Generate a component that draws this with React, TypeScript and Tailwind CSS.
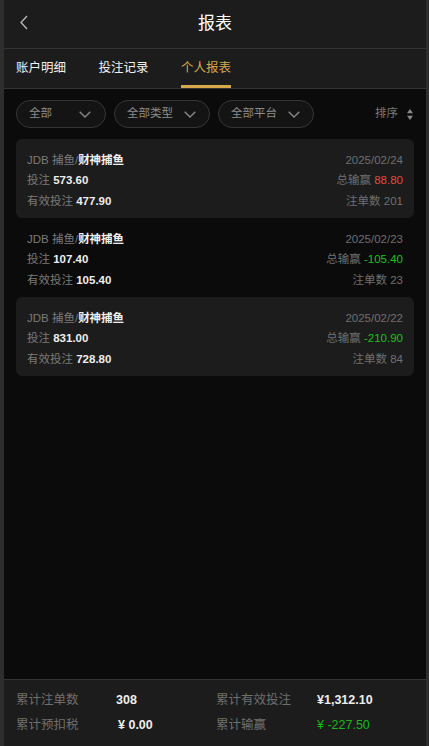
import React from "react";

type Row = {
  date: string;
  bet: string;
  valid: string;
  win: string;
  count: number;
  shaded: boolean;
};

const rows: Row[] = [
  { date: "2025/02/24", bet: "573.60", valid: "477.90", win: "88.80", count: 201, shaded: true },
  { date: "2025/02/23", bet: "107.40", valid: "105.40", win: "-105.40", count: 23, shaded: false },
  { date: "2025/02/22", bet: "831.00", valid: "728.80", win: "-210.90", count: 84, shaded: true },
];

const Chevron = () => (
  <svg width="12" height="7" viewBox="0 0 12 7" fill="none" className="shrink-0">
    <path d="M0.7 0.7 L6 6 L11.3 0.7" stroke="#8a8a8a" strokeWidth="1.3" />
  </svg>
);

const FilterPill: React.FC<{ label: string; wide?: boolean }> = ({ label, wide }) => (
  <div
    className={`h-[28px] rounded-full border border-[#363636] bg-[#141414] flex items-center pl-3 pr-[13px] gap-[11px] text-[11.5px] text-[#8c8c8c] ${
      wide ? "w-[90px] justify-between pr-[14px]" : ""
    }`}
  >
    <span>{label}</span>
    <Chevron />
  </div>
);

const ReportCard: React.FC<{ row: Row }> = ({ row }) => {
  const negative = row.win.startsWith("-");
  return (
    <div
      className={`h-[79px] rounded-[6px] px-[11px] pt-[10.5px] text-[11.5px] leading-[20.5px] ${
        row.shaded ? "bg-[#1c1c1c]" : ""
      }`}
    >
      <div className="flex justify-between">
        <span className="text-[#7a7a7a]">
          JDB 捕鱼/<span className="text-[#f0f0f0] font-bold">财神捕鱼</span>
        </span>
        <span className="text-[#6f6f6f]">{row.date}</span>
      </div>
      <div className="flex justify-between">
        <span className="text-[#7a7a7a]">
          投注 <span className="text-[#eeeeee] font-bold">{row.bet}</span>
        </span>
        <span className="text-[#6f6f6f]">
          总输赢{" "}
          <span className={negative ? "text-[#16c516]" : "text-[#e24a3b]"}>{row.win}</span>
        </span>
      </div>
      <div className="flex justify-between">
        <span className="text-[#7a7a7a]">
          有效投注 <span className="text-[#eeeeee] font-bold">{row.valid}</span>
        </span>
        <span className="text-[#6f6f6f]">注单数 {row.count}</span>
      </div>
    </div>
  );
};

const App: React.FC = () => {
  return (
    <div className="w-[429px] h-[746px] bg-[#2e2e2e] pl-[4px] pr-[3px] font-['Liberation_Sans','Noto_Sans_CJK_SC',sans-serif]">
      <div className="h-full flex flex-col bg-[#0b0b0b]">
        {/* header */}
        <div className="h-[49px] shrink-0 bg-[#1c1c1c] border-b border-[#333333] relative flex items-center justify-center">
          <svg
            width="10"
            height="15"
            viewBox="0 0 10 15"
            fill="none"
            className="absolute left-[15px] top-[15px]"
          >
            <path d="M8 1 L2 7.5 L8 14" stroke="#b5b5b5" strokeWidth="1.4" />
          </svg>
          <span className="text-[17px] text-white">报表</span>
        </div>

        {/* tabs */}
        <div className="h-[40px] shrink-0 bg-[#1c1c1c] border-b border-[#333333] flex px-3 gap-[32.5px] text-[12.5px]">
          <div className="h-full flex items-center text-[#f2f2f2]">账户明细</div>
          <div className="h-full flex items-center text-[#f2f2f2]">投注记录</div>
          <div className="h-full flex items-center text-[#d8a84c] relative">
            个人报表
            <div className="absolute left-0 right-0 bottom-0 h-[3px] bg-[#d6a84c]"></div>
          </div>
        </div>

        {/* body */}
        <div className="flex-1 px-3 pt-[11px]">
          <div className="flex items-center gap-2">
            <FilterPill label="全部" wide />
            <FilterPill label="全部类型" />
            <FilterPill label="全部平台" />
            <div className="ml-auto flex items-center gap-[9px] pr-[1px] text-[11.5px] text-[#7a7a7a]">
              <span>排序</span>
              <svg width="6" height="11" viewBox="0 0 6 11">
                <path d="M3 0 L6 4.2 L0 4.2 Z" fill="#8a8a8a" />
                <path d="M3 11 L6 6.8 L0 6.8 Z" fill="#8a8a8a" />
              </svg>
            </div>
          </div>

          <div className="mt-[11px] flex flex-col">
            {rows.map((r) => (
              <ReportCard key={r.date} row={r} />
            ))}
          </div>
        </div>

        {/* summary */}
        <div className="shrink-0 bg-[#1c1c1c] border-t border-[#333333] px-3 pt-[8px] pb-[8px] text-[12.5px] leading-[25px]">
          <div className="grid grid-cols-[100px_100px_101px_1fr]">
            <span className="text-[#6f6f6f]">累计注单数</span>
            <span className="text-[#eeeeee] font-bold">308</span>
            <span className="text-[#6f6f6f]">累计有效投注</span>
            <span className="text-[#eeeeee] font-bold">¥1,312.10</span>
            <span className="text-[#6f6f6f]">累计预扣税</span>
            <span className="text-[#eeeeee] font-bold pl-[2px]">¥ 0.00</span>
            <span className="text-[#6f6f6f]">累计输赢</span>
            <span className="text-[#16b816]">¥ -227.50</span>
          </div>
        </div>
      </div>
    </div>
  );
};

export default App;
